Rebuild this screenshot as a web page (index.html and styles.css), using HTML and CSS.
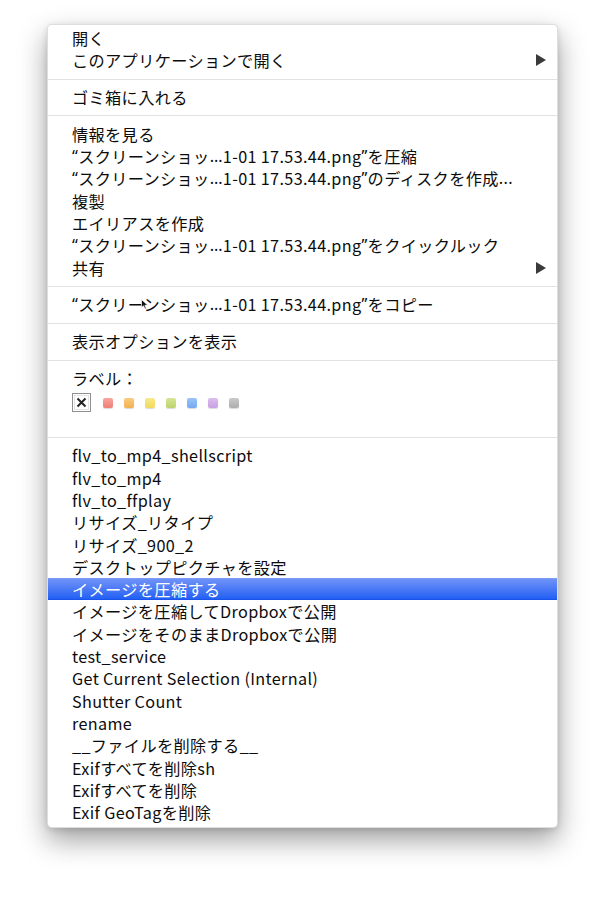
FILE: index.html
```html
<!DOCTYPE html>
<html lang="ja">
<head>
<meta charset="utf-8">
<link rel="stylesheet" href="styles.css">
</head>
<body>
<div class="menu">
  <div class="item">開く</div>
  <div class="item sub"><span>このアプリケーションで開く</span><span class="arrow"></span></div>
  <div class="sep"></div>
  <div class="item">ゴミ箱に入れる</div>
  <div class="sep"></div>
  <div class="item">情報を見る</div>
  <div class="item"><span class="q">“</span>スクリーンショッ<span class="q">…</span>1-01 17.53.44.png<span class="q">”</span>を圧縮</div>
  <div class="item"><span class="q">“</span>スクリーンショッ<span class="q">…</span>1-01 17.53.44.png<span class="q">”</span>のディスクを作成<span class="q">...</span></div>
  <div class="item">複製</div>
  <div class="item">エイリアスを作成</div>
  <div class="item"><span class="q">“</span>スクリーンショッ<span class="q">…</span>1-01 17.53.44.png<span class="q">”</span>をクイックルック</div>
  <div class="item sub"><span>共有</span><span class="arrow"></span></div>
  <div class="sep"></div>
  <div class="item cursor-host"><span class="q">“</span>スクリーンショッ<span class="q">…</span>1-01 17.53.44.png<span class="q">”</span>をコピー
    <svg class="cursor" width="8" height="11" viewBox="0 0 8 11"><path d="M0.5 0.5 L0.5 8.5 L2.5 6.8 L4 10 L5.3 9.4 L3.9 6.3 L6.8 6.3 Z" fill="#111" stroke="#fff" stroke-width="0.7"/></svg>
  </div>
  <div class="sep"></div>
  <div class="item">表示オプションを表示</div>
  <div class="sep"></div>
  <div class="item">ラベル：</div>
  <div class="labels">
    <span class="nolabel"><svg width="11" height="11" viewBox="0 0 11 11"><path d="M1.5 1.5 L9.5 9.5 M9.5 1.5 L1.5 9.5" stroke="#222" stroke-width="2"/></svg></span>
    <span class="sw red"></span>
    <span class="sw orange"></span>
    <span class="sw yellow"></span>
    <span class="sw green"></span>
    <span class="sw blue"></span>
    <span class="sw purple"></span>
    <span class="sw gray"></span>
  </div>
  <div class="sep"></div>
  <div class="item">flv_to_mp4_shellscript</div>
  <div class="item">flv_to_mp4</div>
  <div class="item">flv_to_ffplay</div>
  <div class="item">リサイズ_リタイプ</div>
  <div class="item">リサイズ_900_2</div>
  <div class="item">デスクトップピクチャを設定</div>
  <div class="item active">イメージを圧縮する</div>
  <div class="item">イメージを圧縮してDropboxで公開</div>
  <div class="item">イメージをそのままDropboxで公開</div>
  <div class="item">test_service</div>
  <div class="item">Get Current Selection (Internal)</div>
  <div class="item">Shutter Count</div>
  <div class="item">rename</div>
  <div class="item">__ファイルを削除する__</div>
  <div class="item">Exifすべてを削除sh</div>
  <div class="item">Exifすべてを削除</div>
  <div class="item">Exif GeoTagを削除</div>
</div>
</body>
</html>
```

FILE: styles.css
```css
html, body {
  margin: 0;
  padding: 0;
  background: #ffffff;
}

body {
  width: 606px;
  height: 900px;
  overflow: hidden;
  font-family: "Noto Sans CJK JP", "Noto Sans", sans-serif;
  font-size: 16.2px;
  font-weight: 400;
  letter-spacing: 0.35px;
  color: #0c0c0c;
}

.menu {
  margin: 24px 0 0 47px;
  width: 509px;
  padding: 2px 0 4px 0;
  background: #ffffff;
  border: 1px solid rgba(0, 0, 0, 0.13);
  border-radius: 5px;
  box-shadow: 0 12px 28px rgba(0, 0, 0, 0.38), 0 2px 6px rgba(0, 0, 0, 0.12);
}

.item {
  height: 22.3px;
  line-height: 22.3px;
  padding: 0 11px 0 24px;
  white-space: nowrap;
  display: flex;
  align-items: center;
}

.sub {
  justify-content: space-between;
}

.q {
  font-family: "Noto Sans", sans-serif;
}

.arrow {
  width: 0;
  height: 0;
  border-top: 6px solid transparent;
  border-bottom: 6px solid transparent;
  border-left: 10px solid #3a3a3a;
}

.sep {
  height: 1px;
  background: #e2e2e2;
  margin: 7px 0 6.5px 0;
}

.active {
  color: #ffffff;
  background: linear-gradient(#6e92f7 0%, #4f7cf6 45%, #2260f4 100%);
  border-top: 1px solid #7c9cf6;
  border-bottom: 1px solid #1a52ec;
  height: 20.3px;
}

.cursor-host {
  position: relative;
}

.cursor {
  position: absolute;
  left: 93px;
  top: 6px;
}

.labels {
  height: 40.5px;
  padding: 4px 0 0 24px;
  box-sizing: border-box;
  display: flex;
  align-items: flex-start;
  gap: 11px;
}

.nolabel {
  width: 19px;
  height: 19px;
  box-sizing: border-box;
  border: 1px solid #8f8f8f;
  box-shadow: inset 0 0 0 1px #ffffff, inset 0 0 0 2px #e4e4e4;
  display: flex;
  align-items: center;
  justify-content: center;
  margin-right: 1px;
}

.sw {
  width: 10px;
  height: 10px;
  margin-top: 4.5px;
  border-radius: 2px;
  box-shadow: 0 1px 1px rgba(0, 0, 0, 0.15);
}

.red { background: linear-gradient(#f7a59c, #ef7f76); }
.orange { background: linear-gradient(#f9cb82, #f4b04f); }
.yellow { background: linear-gradient(#f8ea8e, #f2d95c); }
.green { background: linear-gradient(#d5e596, #bcd36d); }
.blue { background: linear-gradient(#9cc3f8, #74a9f3); }
.purple { background: linear-gradient(#dcbdee, #c99fe2); }
.gray { background: linear-gradient(#cacaca, #adadad); }
```
